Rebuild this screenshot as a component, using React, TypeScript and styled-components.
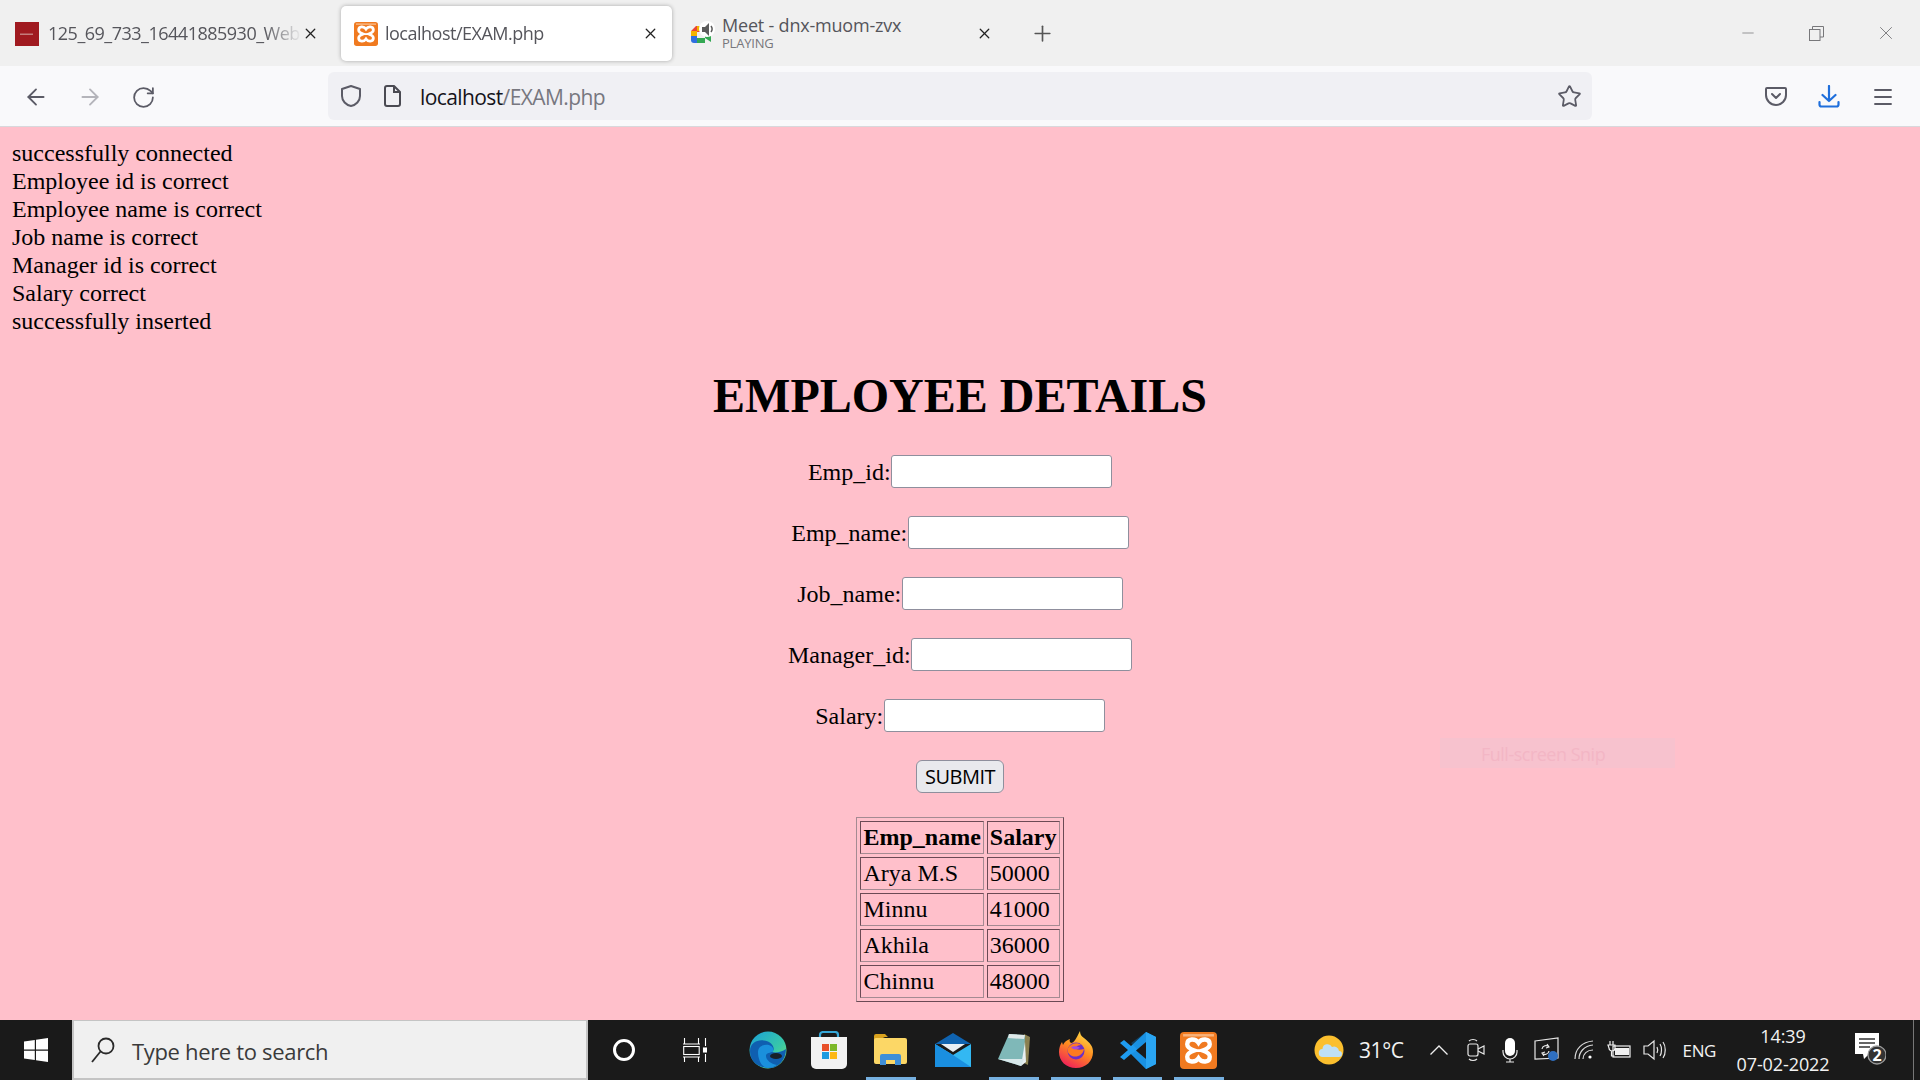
import styled, { createGlobalStyle } from "styled-components";
import {
  ArrowLeft,
  ArrowRight,
  RotateCw,
  Star,
  Menu,
  X,
  Plus,
  Minus,
} from "lucide-react";

const GlobalStyle = createGlobalStyle`
  html, body {
    margin: 0;
    padding: 0;
    height: 100%;
    overflow: hidden;
  }
`;

const uiFont = `"Open Sans", "Noto Sans", sans-serif`;

const Screen = styled.div`
  width: 1920px;
  height: 1080px;
  display: flex;
  flex-direction: column;
  position: relative;
  overflow: hidden;
  font-family: ${uiFont};
`;

/* browser tabs */
const TabBar = styled.div`
  height: 66px;
  flex: none;
  background: #f0f0f0;
  display: flex;
  align-items: center;
  color: #4a4a50;
`;

const Tab = styled.div<{ $active?: boolean; $width: number; $left: number }>`
  width: ${(p) => p.$width}px;
  margin-left: ${(p) => p.$left}px;
  height: 55px;
  margin-top: 1px;
  flex: none;
  display: flex;
  align-items: center;
  box-sizing: border-box;
  padding: 0 13px 0 13px;
  border-radius: 5px;
  background: ${(p) => (p.$active ? "#ffffff" : "transparent")};
  box-shadow: ${(p) => (p.$active ? "0 0 4px rgba(0,0,0,.3)" : "none")};
`;

const Favicon = styled.svg`
  width: 24px;
  height: 24px;
  flex: none;
`;

const TabLabel = styled.div<{ $gap: number }>`
  flex: 1;
  min-width: 0;
  margin: -2px 0 0 ${(p) => p.$gap}px;
  font-size: 18px;
  letter-spacing: -0.5px;
  white-space: nowrap;
  overflow: hidden;
  color: #55555b;
  -webkit-mask-image: linear-gradient(to right, #000 85%, transparent);
`;

const TabSub = styled.div`
  font-size: 13px;
  line-height: 15px;
  letter-spacing: -0.2px;
  color: #77777c;
`;

const TabTitle = styled.div`
  font-size: 18px;
  line-height: 22px;
  letter-spacing: -0.2px;
  color: #55555b;
`;

const MeetText = styled.div`
  flex: 1;
  margin-left: 8px;
  margin-top: -2px;
  white-space: nowrap;
`;

const WindowControls = styled.div`
  margin-left: auto;
  display: flex;
  align-items: center;
  color: #77777a;
`;

const WindowButton = styled.div`
  width: 69px;
  display: flex;
  justify-content: center;
`;

/* address bar row */
const NavBar = styled.div`
  height: 60px;
  flex: none;
  background: #f9f9fb;
  border-bottom: 1px solid #d8d8dc;
  display: flex;
  align-items: center;
  box-sizing: content-box;
  color: #5b5b66;
`;

const NavButtons = styled.div`
  width: 328px;
  flex: none;
  display: flex;
  align-items: center;
  gap: 28px;
  padding: 2px 0 0 23px;
  box-sizing: border-box;
`;

const UrlBar = styled.div`
  width: 1264px;
  height: 48px;
  flex: none;
  background: #f0f0f4;
  border-radius: 6px;
  display: flex;
  align-items: center;
  box-sizing: border-box;
  padding: 0 10px 0 12px;
`;

const UrlIconGap = styled.div`
  width: 22px;
  flex: none;
`;

const UrlText = styled.div`
  margin: 2px 0 0 18px;
  font-size: 21px;
  letter-spacing: -0.6px;
  color: #77777f;
`;

const UrlHost = styled.span`
  color: #15141a;
`;

const ToolButtons = styled.div`
  margin-left: 173px;
  display: flex;
  align-items: center;
  gap: 31px;
  padding-top: 1px;
`;

/* page content */
const Page = styled.main`
  flex: 1;
  min-height: 0;
  background: #ffc0cb;
  overflow: hidden;
  box-sizing: border-box;
  padding: 12px 12px 0;
  font-family: "Liberation Serif", "Times New Roman", serif;
  font-size: 24px;
  line-height: 28px;
  color: #000;
`;

const Status = styled.div`
  white-space: pre-line;
`;

const Heading = styled.h1`
  margin: 33px 0 32px;
  font-size: 48px;
  line-height: 55px;
  font-weight: 700;
  text-align: center;
`;

const Form = styled.form`
  display: flex;
  flex-direction: column;
  align-items: center;
  gap: 28px;
`;

const FieldRow = styled.label`
  display: flex;
  align-items: center;
  height: 33px;
`;

const FieldInput = styled.input`
  width: 221px;
  height: 33px;
  box-sizing: border-box;
  margin-left: 0.5px;
  background: #fff;
  border: 1.5px solid #8f8f9d;
  border-radius: 3px;
  padding: 0;
`;

const SubmitButton = styled.button`
  width: 88px;
  height: 33px;
  box-sizing: border-box;
  padding: 0;
  background: #e9e9ed;
  border: 1.5px solid #8f8f9d;
  border-radius: 6px;
  font-family: ${uiFont};
  font-size: 20px;
  letter-spacing: -0.5px;
  color: #000;
`;

const Table = styled.table`
  margin: 24px auto 0;
  border: 1px solid;
  border-color: #a58a92 #6b4a55 #6b4a55 #a58a92;
  border-spacing: 3px;
`;

const Th = styled.th`
  border: 1px solid;
  border-color: #6b4a55 #a58a92 #a58a92 #6b4a55;
  padding: 2px;
  text-align: left;
  font-weight: 700;
  line-height: 27px;
`;

const Td = styled.td`
  border: 1px solid;
  border-color: #6b4a55 #a58a92 #a58a92 #6b4a55;
  padding: 2px;
  line-height: 27px;
`;

/* faded snipping tool toast */
const SnipToast = styled.div`
  position: absolute;
  left: 1440px;
  top: 738px;
  width: 235px;
  height: 30px;
  background: #f7c2ce;
  color: #f3b6c5;
  font-size: 18px;
  line-height: 32px;
  padding-left: 41px;
  letter-spacing: -0.5px;
  box-sizing: border-box;
`;

/* windows taskbar */
const Taskbar = styled.footer`
  height: 60px;
  flex: none;
  background: #1a1a1a;
  display: flex;
  align-items: stretch;
  color: #fff;
  position: relative;
`;

const StartSlot = styled.div`
  width: 72px;
  flex: none;
  display: flex;
  align-items: center;
  justify-content: center;
  box-sizing: border-box;
`;

const SearchBox = styled.div`
  width: 516px;
  flex: none;
  background: #f0f0f0;
  border: 2px solid #c4c4c4;
  border-top-width: 1px;
  box-sizing: border-box;
  display: flex;
  align-items: center;
  padding-left: 17px;
  color: #3a3a3a;
  font-size: 22px;
  letter-spacing: -0.33px;
`;

const SearchText = styled.span`
  margin: 2px 0 0 17px;
`;

const SystemSlot = styled.div<{ $width: number }>`
  width: ${(p) => p.$width}px;
  flex: none;
  display: flex;
  align-items: center;
  justify-content: center;
`;

const AppSlot = styled.div<{ $open?: boolean }>`
  width: 61.6px;
  flex: none;
  display: flex;
  align-items: center;
  justify-content: center;
  position: relative;
  &::after {
    content: "";
    display: ${(p) => (p.$open ? "block" : "none")};
    position: absolute;
    left: 6px;
    right: 6px;
    bottom: 0;
    height: 3px;
    background: #76b0e0;
  }
`;

const Tray = styled.div`
  margin-left: auto;
  display: flex;
  align-items: center;
  padding-right: 34px;
`;

const TrayIcon = styled.div<{ $width: number; $left?: number }>`
  width: ${(p) => p.$width}px;
  margin-left: ${(p) => p.$left ?? 0}px;
  flex: none;
  display: flex;
  align-items: center;
  justify-content: center;
`;

const TrayText = styled.span<{ $left: number; $size: number }>`
  margin-left: ${(p) => p.$left}px;
  font-size: ${(p) => p.$size}px;
  letter-spacing: -0.4px;
  color: #f2f2f2;
`;

const Clock = styled.div`
  width: 100px;
  margin-left: 17px;
  text-align: center;
  font-size: 18px;
  letter-spacing: -0.1px;
  line-height: 28px;
  color: #f2f2f2;
`;

const DesktopEdge = styled.div`
  position: absolute;
  right: 6px;
  top: 0;
  bottom: 0;
  width: 1.5px;
  background: #777;
`;

const XamppIcon = ({ size = 24 }: { size?: number }) => (
  <svg width={size} height={size} viewBox="0 0 36 36">
    <rect width="36" height="36" rx="4" fill="#f07a20" />
    <rect x="3" y="2" width="30" height="2.4" fill="#f8b27a" />
    <path
      d="M7 12c0-6 8-6 11-1.500C21 6 29 6 29 12c0 3.500-4 5-7 6 3 1 7 2.500 7 6 0 6-8 6-11 1.500C15 30 7 30 7 24c0-3.500 4-5 7-6-3-1-7-2.500-7-6Z"
      fill="none"
      stroke="#fff"
      strokeWidth="4.200"
    />
  </svg>
);

const MeetIcon = () => (
  <Favicon viewBox="0 0 24 24" style={{ overflow: "visible" }}>
    <path d="M1 9l5-5h9v6H7v4H1Z" fill="#ea4335" />
    <path d="M1 9h6v6H1Z" fill="#f4b400" />
    <path d="M1 14h6v7H4a3 3 0 0 1-3-3Z" fill="#2f6fe0" />
    <path d="M7 16h8v5H7Z" fill="#34a853" />
    <path d="M15 12l6-4v12l-6-4Z" fill="#34a853" />
    <path d="M7 4h8v5H7Z" fill="#f4b400" />
    <circle cx="17" cy="7" r="8" fill="#fff" />
    <path d="M12 5h3l4-4v13l-4-4h-3Z" fill="#5b5b5b" />
    <path d="M21 4c1.500 2 1.500 4 0 6" fill="none" stroke="#5b5b5b" strokeWidth="1.500" />
  </Favicon>
);

const Shield = () => (
  <svg width="22" height="24" viewBox="0 0 22 24" fill="none" stroke="#5b5b66" strokeWidth="2">
    <path d="M11 2 20 5v7c0 5-4 9-9 10C6 21 2 17 2 12V5Z" strokeLinejoin="round" />
  </svg>
);

const PageIcon = () => (
  <svg width="18" height="22" viewBox="0 0 18 22" fill="none" stroke="#4a4a52" strokeWidth="2">
    <path d="M1 3a2 2 0 0 1 2-2h7l6 6v12a2 2 0 0 1-2 2H3a2 2 0 0 1-2-2Z" strokeLinejoin="round" />
    <path d="M10 1v6h6" />
  </svg>
);

const Pocket = () => (
  <svg width="22" height="21" viewBox="0 0 22 21" fill="none" stroke="#5b5b66" strokeWidth="2">
    <path d="M2 2h18a1 1 0 0 1 1 1v6a10 10 0 0 1-20 0V3a1 1 0 0 1 1-1Z" />
    <path d="M7 8l4 4 4-4" strokeLinecap="round" strokeLinejoin="round" />
  </svg>
);

const DownloadIcon = () => (
  <svg width="22" height="24" viewBox="0 0 22 24" fill="none" stroke="#1f6fdc" strokeWidth="2.200" strokeLinecap="round" strokeLinejoin="round">
    <path d="M11 1v15M4.500 10 11 16l6.500-6" />
    <path d="M1.500 17v2.500a2 2 0 0 0 2 2h15a2 2 0 0 0 2-2V17" />
  </svg>
);

const RestoreIcon = () => (
  <svg width="15" height="15" viewBox="0 0 15 15" fill="none" stroke="#77777a" strokeWidth="1">
    <rect x="0.500" y="3.500" width="10.500" height="11" />
    <path d="M3.500 3.500V.5h11v10.500H11" />
  </svg>
);

const WindowsLogo = () => (
  <svg width="24" height="24" viewBox="0 0 24 24" fill="#fff">
    <path d="M0 3.500 10.800 2v9.500H0ZM12 1.800 24 0v11.500H12ZM0 12.700h10.800V22L0 20.500ZM12 12.700h12V24l-12-1.800Z" />
  </svg>
);

const SearchGlass = () => (
  <svg width="24" height="26" viewBox="0 0 24 26" fill="none" stroke="#2a2a2a" strokeWidth="1.800">
    <circle cx="15" cy="9" r="7.500" />
    <path d="M9.500 14.500 1 25" />
  </svg>
);

const Cortana = () => (
  <svg width="24" height="24" viewBox="0 0 24 24" fill="none" stroke="#fff" strokeWidth="3">
    <circle cx="12" cy="12" r="9.500" />
  </svg>
);

const TaskView = () => (
  <svg width="24" height="24" viewBox="0 0 24 24" fill="none" stroke="#fff" strokeWidth="1.100">
    <path d="M0 6h17M15.500 0v6M1.500 0v6" />
    <rect x="0.700" y="8.500" width="15.500" height="8" />
    <path d="M0 19h17M1.500 19v5M15.500 19v5" />
    <path d="M22.500 0v8M22.500 16v8" />
    <rect x="20.500" y="10" width="4" height="4" fill="#fff" />
  </svg>
);

const EdgeIcon = () => (
  <svg width="38" height="38" viewBox="0 0 38 38">
    <defs>
      <linearGradient id="edgeA" x1="0" y1="0" x2="1" y2="1">
        <stop offset="0" stopColor="#1aa0d8" />
        <stop offset="0.600" stopColor="#38c8a8" />
        <stop offset="1" stopColor="#7fe06a" />
      </linearGradient>
    </defs>
    <circle cx="19" cy="19" r="18.500" fill="url(#edgeA)" />
    <path d="M1 20C1 10 12 7 20 11c5 3 6 8 3 10 4 1 10 0 14-3 0 12-9 20-18 19C8 36 1 30 1 20Z" fill="#0f5fb0" />
    <path d="M9 21c0-7 9-9 13-6 3 2 3 5 1 6-3 1-6 1-6 4 0 4 5 8 11 9-3 2-6 3-9 3C13 37 9 29 9 21Z" fill="#1a90dc" />
    <ellipse cx="27" cy="25" rx="6" ry="3" fill="#1a1a1a" opacity="0.900" />
  </svg>
);

const StoreIcon = () => (
  <svg width="36" height="38" viewBox="0 0 36 38">
    <path d="M9 8V4a3 3 0 0 1 3-3h12a3 3 0 0 1 3 3v4" fill="none" stroke="#35a7d8" strokeWidth="2.200" />
    <path d="M0 6h36v27a5 5 0 0 1-5 5H5a5 5 0 0 1-5-5Z" fill="#f2f2f2" />
    <rect x="11" y="13" width="7" height="7" fill="#e8502a" />
    <rect x="19" y="13" width="7" height="7" fill="#7cb82a" />
    <rect x="11" y="21" width="7" height="7" fill="#1e9be0" />
    <rect x="19" y="21" width="7" height="7" fill="#fdb813" />
  </svg>
);

const FolderIcon = () => (
  <svg width="33" height="32" viewBox="0 0 33 32">
    <path d="M0 2a2 2 0 0 1 2-2h9l3 3h-3L0 8Z" fill="#d9a21e" />
    <rect y="4" width="33" height="26" rx="2" fill="#fcd766" />
    <path d="M6 31v-9a2 2 0 0 1 2-2h17a2 2 0 0 1 2 2v9h-6v-5h-9v5Z" fill="#3f8fd8" />
  </svg>
);

const MailIcon = () => (
  <svg width="36" height="34" viewBox="0 0 36 34">
    <path d="M18 0 36 11H0Z" fill="#0f63b0" />
    <path d="M6 11h24l-12 8Z" fill="#e8eef4" />
    <path d="M0 11l18 11 18-11v23H0Z" fill="#33b8f2" />
    <path d="M0 34V11l18 11 18 12Z" fill="#1a8fe0" />
  </svg>
);

const NotepadIcon = () => (
  <svg width="34" height="34" viewBox="0 0 34 34">
    <path d="M27 1 33 4l-2 28-4-2Z" fill="#8a8050" />
    <path d="M12 1 28 2l-1 24-3 7L1 26Z" fill="#7fb8b8" />
    <path d="M12 1 28 2l-1 4-16-1Z" fill="#dfe8e8" />
    <path d="M24 33l4-24 1 20Z" fill="#e8f0f2" />
    <path d="M1 26 24 33 27 26Z" fill="#d8e8ea" />
  </svg>
);

const FirefoxIcon = () => (
  <svg width="36" height="38" viewBox="0 0 36 38">
    <defs>
      <linearGradient id="foxA" x1="0.800" y1="0" x2="0.300" y2="1">
        <stop offset="0" stopColor="#ffe24a" />
        <stop offset="0.500" stopColor="#ff8a20" />
        <stop offset="1" stopColor="#f0205a" />
      </linearGradient>
    </defs>
    <path d="M18 37C8 37 1 30 1 21c0-4 1-7 3-10l1 3c1-3 4-5 7-6-1 2 0 3 1 4 3 0 5-4 9-12 0 3 1 5 4 7 6 5 9 8 9 14 0 9-7 16-17 16Z" fill="url(#foxA)" />
    <circle cx="18" cy="20" r="8.500" fill="#6b2fc9" />
    <path d="M10 17c3-5 10-6 13-3-3 0-4 1-6 3 1 2 5 2 9 1-1 6-7 9-12 7-4-2-5-5-4-8Z" fill="#ff7a20" />
    <path d="M13 16c3-1 7-1 9 1-3 1-6 3-9-1Z" fill="#a04ae0" />
  </svg>
);

const VsCodeIcon = () => (
  <svg width="37" height="37" viewBox="0 0 37 37">
    <path d="M27 0l10 5v27l-10 5L12 22l-7 6-4-3 8-7-8-7 4-3 7 6Z" fill="#1f9cf0" />
    <path d="M27 0v37l-15-15 7-4-7-7Z" fill="#0f7fcc" opacity="0.350" />
    <path d="M27 10v17l-10-8.500Z" fill="#1a1a1a" />
    <path d="M27 0l10 5v27l-10 5Z" fill="#2aa5f2" />
  </svg>
);

const WeatherIcon = () => (
  <svg width="30" height="30" viewBox="0 0 30 30">
    <circle cx="15" cy="15" r="14.500" fill="#fbbf2e" />
    <path d="M9 22a4 4 0 0 1-.500-8 5 5 0 0 1 9.500-2 5 5 0 0 1 7 4 3 3 0 0 1 0 6Z" fill="#bfe0f5" />
  </svg>
);

const ChevronTray = () => (
  <svg width="18" height="10" viewBox="0 0 18 10" fill="none" stroke="#eeeeee" strokeWidth="1.300">
    <path d="M.5 9.500 9 1l8.500 8.500" />
  </svg>
);

const VideoTray = () => (
  <svg width="18" height="24" viewBox="0 0 18 24" fill="none" stroke="#e8e8e8" strokeWidth="1.200">
    <rect x="1" y="6" width="10" height="12" rx="2" />
    <path d="M11 11l6-3v8l-6-3" />
    <path d="M2 3c2-2 6-2 8 0M2 21c2 2 6 2 8 0" />
  </svg>
);

const MicTray = () => (
  <svg width="16" height="25" viewBox="0 0 16 25">
    <rect x="3" y="0" width="10" height="18" rx="5" fill="#fff" />
    <path d="M1 12v2a7 7 0 0 0 14 0v-2M8 21v3M4 24h8" fill="none" stroke="#e8e8e8" strokeWidth="1.200" />
  </svg>
);

const ScreenTray = () => (
  <svg width="25" height="26" viewBox="0 0 25 26" fill="none" stroke="#e8e8e8" strokeWidth="1.200">
    <path d="M1 4 24 1v20L1 22Z" />
    <path d="M8 12a4 4 0 0 1 7-2M15 14a4 4 0 0 1-7 2M13 7l2 3-3 1M10 19l-2-3 3-1" />
    <circle cx="19" cy="19" r="5" fill="#2f6fc0" stroke="none" />
  </svg>
);

const WifiTray = () => (
  <svg width="20" height="20" viewBox="0 0 20 20" fill="none" stroke="#d8d8d8" strokeWidth="1.200">
    <path d="M1 19C1 9 8 2 19 1M5 19c0-7 5-13 14-14M9 19c0-5 4-9 10-9" />
    <circle cx="16" cy="17" r="1.600" fill="#fff" stroke="none" />
  </svg>
);

const BatteryTray = () => (
  <svg width="24" height="20" viewBox="0 0 24 20">
    <path d="M3 1v4M6 1v4M1 5h7v3a3 3 0 0 1-6 0ZM4.500 11v5h3" fill="none" stroke="#f0f0f0" strokeWidth="1.200" />
    <rect x="6" y="6" width="17" height="11" fill="none" stroke="#f0f0f0" strokeWidth="1.200" />
    <rect x="8" y="8" width="14" height="7" fill="#f0f0f0" />
  </svg>
);

const SpeakerTray = () => (
  <svg width="23" height="22" viewBox="0 0 23 22" fill="none" stroke="#e8e8e8" strokeWidth="1.200">
    <path d="M1 7h4l6-5v18l-6-5H1Z" />
    <path d="M14 8c1 2 1 4 0 6M17 5c2 3 2 9 0 12M20 3c3 4 3 12 0 16" />
  </svg>
);

const NotificationIcon = () => (
  <svg width="32" height="36" viewBox="0 0 32 36">
    <path d="M1 1h24v21H15l-5 5-1-5H1Z" fill="#fff" />
    <path d="M5 7h16M5 11h16M5 15h11" stroke="#333" strokeWidth="1.300" />
    <circle cx="23" cy="23" r="9" fill="#333" stroke="#999" strokeWidth="1.300" />
    <text x="23" y="29" textAnchor="middle" fontSize="16" fontWeight="700" fill="#fff" fontFamily="Open Sans, sans-serif">
      2
    </text>
  </svg>
);

const fields = ["Emp_id", "Emp_name", "Job_name", "Manager_id", "Salary"];

const employees = [
  { name: "Arya M.S", salary: 50000 },
  { name: "Minnu", salary: 41000 },
  { name: "Akhila", salary: 36000 },
  { name: "Chinnu", salary: 48000 },
];

const statusLines = `successfully connected
Employee id is correct
Employee name is correct
Job name is correct
Manager id is correct
Salary correct
successfully inserted`;

export default function App() {
  return (
    <Screen>
      <GlobalStyle />
      <TabBar>
        <Tab $width={330} $left={2}>
          <Favicon viewBox="0 0 24 24">
            <rect width="24" height="24" fill="#a01a20" />
            <rect x="5" y="11.500" width="13" height="1.500" fill="#c47c7c" />
          </Favicon>
          <TabLabel $gap={9}>125_69_733_16441885930_Web</TabLabel>
          <X size={17} strokeWidth={1.8} color="#222" />
        </Tab>
        <Tab $active $width={331} $left={9}>
          <Favicon as="div">
            <XamppIcon />
          </Favicon>
          <TabLabel $gap={7}>localhost/EXAM.php</TabLabel>
          <X size={17} strokeWidth={1.8} color="#222" />
        </Tab>
        <Tab $width={329} $left={5}>
          <MeetIcon />
          <MeetText>
            <TabTitle>Meet - dnx-muom-zvx</TabTitle>
            <TabSub>PLAYING</TabSub>
          </MeetText>
          <X size={17} strokeWidth={1.8} color="#222" />
        </Tab>
        <Plus size={25} strokeWidth={1.6} color="#555" style={{ marginLeft: 24 }} />
        <WindowControls>
          <WindowButton>
            <Minus size={18} strokeWidth={1} />
          </WindowButton>
          <WindowButton>
            <RestoreIcon />
          </WindowButton>
          <WindowButton>
            <X size={22} strokeWidth={1} />
          </WindowButton>
        </WindowControls>
      </TabBar>

      <NavBar>
        <NavButtons>
          <ArrowLeft size={26} strokeWidth={1.7} />
          <ArrowRight size={26} strokeWidth={1.7} color="#b4b4ba" />
          <RotateCw size={25} strokeWidth={1.7} />
        </NavButtons>
        <UrlBar>
          <Shield />
          <UrlIconGap />
          <PageIcon />
          <UrlText>
            <UrlHost>localhost</UrlHost>/EXAM.php
          </UrlText>
          <Star size={25} strokeWidth={1.7} style={{ marginLeft: "auto" }} />
        </UrlBar>
        <ToolButtons>
          <Pocket />
          <DownloadIcon />
          <Menu size={24} strokeWidth={1.9} />
        </ToolButtons>
      </NavBar>

      <Page>
        <Status>{statusLines}</Status>
        <Heading>EMPLOYEE DETAILS</Heading>
        <Form onSubmit={(e) => e.preventDefault()}>
          {fields.map((field) => (
            <FieldRow key={field}>
              {field}:
              <FieldInput type="text" />
            </FieldRow>
          ))}
          <SubmitButton type="submit">SUBMIT</SubmitButton>
        </Form>
        <Table>
          <thead>
            <tr>
              <Th>Emp_name</Th>
              <Th>Salary</Th>
            </tr>
          </thead>
          <tbody>
            {employees.map((row) => (
              <tr key={row.name}>
                <Td>{row.name}</Td>
                <Td>{row.salary}</Td>
              </tr>
            ))}
          </tbody>
        </Table>
      </Page>

      <SnipToast>Full-screen Snip</SnipToast>

      <Taskbar>
        <StartSlot>
          <WindowsLogo />
        </StartSlot>
        <SearchBox>
          <SearchGlass />
          <SearchText>Type here to search</SearchText>
        </SearchBox>
        <SystemSlot $width={72}>
          <Cortana />
        </SystemSlot>
        <SystemSlot $width={70}>
          <TaskView />
        </SystemSlot>
        <SystemSlot $width={7} />
        <AppSlot>
          <EdgeIcon />
        </AppSlot>
        <AppSlot>
          <StoreIcon />
        </AppSlot>
        <AppSlot $open>
          <FolderIcon />
        </AppSlot>
        <AppSlot>
          <MailIcon />
        </AppSlot>
        <AppSlot $open>
          <NotepadIcon />
        </AppSlot>
        <AppSlot $open>
          <FirefoxIcon />
        </AppSlot>
        <AppSlot $open>
          <VsCodeIcon />
        </AppSlot>
        <AppSlot $open>
          <XamppIcon size={37} />
        </AppSlot>
        <Tray>
          <WeatherIcon />
          <TrayText $left={15} $size={21}>
            31°C
          </TrayText>
          <TrayIcon $width={20} $left={25}>
            <ChevronTray />
          </TrayIcon>
          <TrayIcon $width={18} $left={18}>
            <VideoTray />
          </TrayIcon>
          <TrayIcon $width={16} $left={17}>
            <MicTray />
          </TrayIcon>
          <TrayIcon $width={25} $left={16}>
            <ScreenTray />
          </TrayIcon>
          <TrayIcon $width={20} $left={15}>
            <WifiTray />
          </TrayIcon>
          <TrayIcon $width={24} $left={13}>
            <BatteryTray />
          </TrayIcon>
          <TrayIcon $width={23} $left={12}>
            <SpeakerTray />
          </TrayIcon>
          <TrayText $left={17} $size={17}>
            ENG
          </TrayText>
          <Clock>
            14:39
            <br />
            07-02-2022
          </Clock>
          <TrayIcon $width={32} $left={21}>
            <NotificationIcon />
          </TrayIcon>
        </Tray>
        <DesktopEdge />
      </Taskbar>
    </Screen>
  );
}
